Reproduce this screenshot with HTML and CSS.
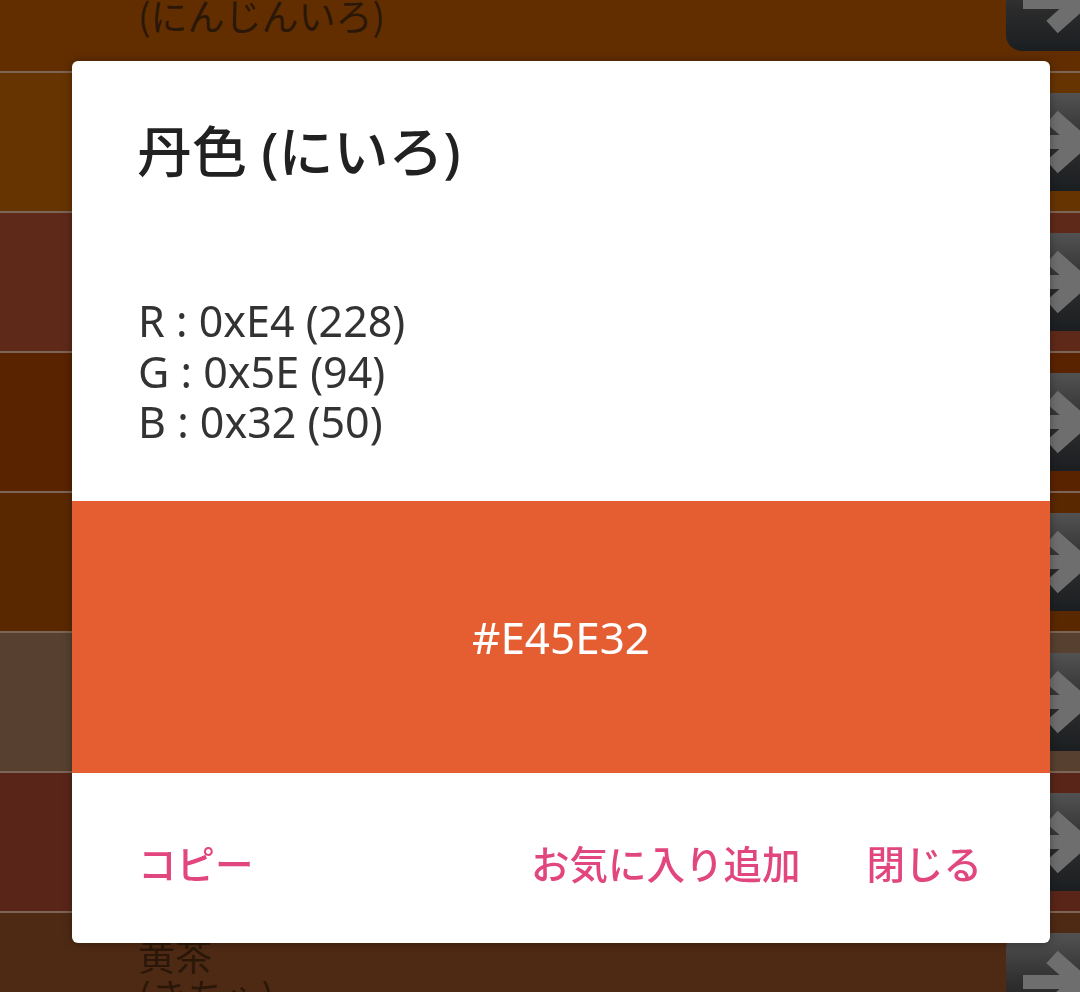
FILE: index.html
```html
<!DOCTYPE html>
<html lang="ja">
<head>
<meta charset="utf-8">
<title>丹色 (にいろ)</title>
<link rel="stylesheet" href="styles.css">
</head>
<body>
<div class="list">
  <div class="row c0"><div class="names"><div>人参色</div><div>(にんじんいろ)</div></div><div class="go"><svg viewBox="0 0 92 98"><line x1="17" y1="49" x2="70" y2="49" class="shaft"/><polyline points="46,24 74,49 46,74" class="head"/></svg></div></div>
  <div class="row c1"><div class="names"></div><div class="go"><svg viewBox="0 0 92 98"><line x1="17" y1="49" x2="70" y2="49" class="shaft"/><polyline points="46,24 74,49 46,74" class="head"/></svg></div></div>
  <div class="row c2"><div class="names"></div><div class="go"><svg viewBox="0 0 92 98"><line x1="17" y1="49" x2="70" y2="49" class="shaft"/><polyline points="46,24 74,49 46,74" class="head"/></svg></div></div>
  <div class="row c3"><div class="names"></div><div class="go"><svg viewBox="0 0 92 98"><line x1="17" y1="49" x2="70" y2="49" class="shaft"/><polyline points="46,24 74,49 46,74" class="head"/></svg></div></div>
  <div class="row c4"><div class="names"></div><div class="go"><svg viewBox="0 0 92 98"><line x1="17" y1="49" x2="70" y2="49" class="shaft"/><polyline points="46,24 74,49 46,74" class="head"/></svg></div></div>
  <div class="row c5"><div class="names"></div><div class="go"><svg viewBox="0 0 92 98"><line x1="17" y1="49" x2="70" y2="49" class="shaft"/><polyline points="46,24 74,49 46,74" class="head"/></svg></div></div>
  <div class="row c6"><div class="names"></div><div class="go"><svg viewBox="0 0 92 98"><line x1="17" y1="49" x2="70" y2="49" class="shaft"/><polyline points="46,24 74,49 46,74" class="head"/></svg></div></div>
  <div class="row c7"><div class="names"><div>黄茶</div><div>(きちゃ)</div></div><div class="go"><svg viewBox="0 0 92 98"><line x1="17" y1="49" x2="70" y2="49" class="shaft"/><polyline points="46,24 74,49 46,74" class="head"/></svg></div></div>
</div>

<div class="overlay">
  <div class="dialog">
    <h1 class="title">丹色 (にいろ)</h1>
    <div class="rgb">
      <div>R : 0xE4 (228)</div>
      <div>G : 0x5E (94)</div>
      <div>B : 0x32 (50)</div>
    </div>
    <div class="swatch">#E45E32</div>
    <div class="actions">
      <button class="btn">コピー</button>
      <span class="spacer"></span>
      <button class="btn">お気に入り追加</button>
      <button class="btn last">閉じる</button>
    </div>
  </div>
</div>
</body>
</html>
```

FILE: styles.css
```css
html, body {
  margin: 0;
  padding: 0;
  height: 100%;
  overflow: hidden;
}
body {
  background: #4e2a14;
  font-family: "Noto Sans", "Noto Sans CJK JP", sans-serif;
}

.list {
  margin-top: -67px;
  height: 1059px;
  overflow: hidden;
}
.row {
  box-sizing: border-box;
  height: 140px;
  border-bottom: 2px solid #7c6456;
  display: flex;
  align-items: center;
}
.c0 { background: #622e00; }
.c1 { background: #663400; }
.c2 { background: #5e2919; }
.c3 { background: #5a2300; }
.c4 { background: #5a2800; }
.c5 { background: #574030; }
.c6 { background: #592518; }
.c7 { background: #4e2a14; }

.names {
  flex: 1;
  align-self: flex-start;
  padding: 22px 0 0 138px;
  font-family: "Noto Sans CJK JP", sans-serif;
  font-size: 37px;
  line-height: 40px;
  color: #2a1708;
}
.go {
  width: 92px;
  height: 98px;
  margin-right: -18px;
  border-radius: 16px;
  background: linear-gradient(#525252, #2c2c2c 55%, #1b1e21);
  flex: none;
}
.go svg {
  display: block;
  width: 92px;
  height: 98px;
}
.shaft {
  stroke: #6e6e6e;
  stroke-width: 14;
}
.head {
  fill: none;
  stroke: #6e6e6e;
  stroke-width: 17;
  stroke-linejoin: miter;
}

.overlay {
  position: fixed;
  inset: 0;
  box-sizing: border-box;
  padding: 61px 0 0 72px;
}
.dialog {
  width: 978px;
  height: 882px;
  background: #fff;
  border-radius: 6px;
  box-shadow: 0 0 8px rgba(0, 0, 0, 0.35);
  overflow: hidden;
  display: flex;
  flex-direction: column;
}
.title {
  margin: 0;
  padding: 57px 0 0 65px;
  font-size: 55px;
  line-height: 66px;
  font-weight: 500;
  color: #212121;
}
.rgb {
  margin-top: 112px;
  padding-left: 66px;
  font-size: 43px;
  line-height: 50.5px;
  color: #333;
  height: 151.5px;
}
.swatch {
  margin-top: 53.5px;
  height: 272px;
  background: #e45e32;
  color: #fff;
  font-size: 44px;
  display: flex;
  align-items: center;
  justify-content: center;
  flex: none;
}
.actions {
  flex: 1;
  display: flex;
  align-items: center;
  padding: 8px 68px 0 66px;
}
.spacer {
  flex: 1;
}
.btn {
  border: 0;
  background: none;
  padding: 0;
  font-family: "Noto Sans CJK JP", sans-serif;
  font-size: 38.5px;
  line-height: 50px;
  font-weight: 500;
  color: #e2467e;
}
.btn.last {
  margin-left: 66px;
}
```
